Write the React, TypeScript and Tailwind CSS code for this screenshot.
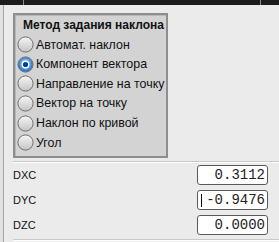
import React from "react";

const MODES = [
  "Автомат. наклон",
  "Компонент вектора",
  "Направление на точку",
  "Вектор на точку",
  "Наклон по кривой",
  "Угол",
];

const FIELDS = [
  { label: "DXC", value: "0.3112", focused: false },
  { label: "DYC", value: "-0.9476", focused: true },
  { label: "DZC", value: "0.0000", focused: false },
];

function Radio({ checked }: { checked: boolean }) {
  return (
    <svg width="17" height="17" viewBox="0 0 17 17" className="shrink-0">
      <defs>
        <linearGradient id="off" x1="0" y1="0" x2="0" y2="1">
          <stop offset="0" stopColor="#f6f6f6" />
          <stop offset="1" stopColor="#c4c4c4" />
        </linearGradient>
        <radialGradient id="on" cx="0.5" cy="0.4" r="0.6">
          <stop offset="0" stopColor="#a6d8ff" />
          <stop offset="1" stopColor="#2a7fd6" />
        </radialGradient>
      </defs>
      <circle cx="8.5" cy="8.5" r="7.6" fill="url(#off)" stroke="#6e6e6e" strokeWidth="1" />
      {checked && (
        <>
          <circle cx="8.5" cy="8.5" r="6.8" fill="url(#on)" stroke="#1d5fa8" strokeWidth="0.8" />
          <circle cx="8.5" cy="8.5" r="3.9" fill="#ffffff" />
          <circle cx="8.5" cy="8.5" r="2.6" fill="#0b3d8c" />
        </>
      )}
    </svg>
  );
}

export default function App() {
  const selected = 1;
  return (
    <div className="w-[279px] h-[242px] overflow-hidden bg-[#ebebeb] font-['Liberation_Sans',Arial,sans-serif] text-[#111]">
      {/* top strip */}
      <div className="h-[5px] bg-[#1c1c1c] flex">
        <div className="w-[23px]" />
        <div className="w-px bg-[#8a8a8a]" />
        <div className="flex-1" />
        <div className="w-px bg-[#8a8a8a]" />
        <div className="w-[18px]" />
      </div>

      <div className="flex h-[237px]">
        <div className="w-[3px] bg-[#e2e2e2]" />
        <div className="w-px bg-[#a4a4a4]" />

        <div className="flex-1 flex flex-col pt-[8px]">
          <div className="ml-[9px] w-[155px] h-[145px] bg-[#d3d3d3] border-2 border-[#8e8e8e] shadow-[inset_1px_1px_0_#b8b8b8] pt-[3px] pl-[2px] overflow-hidden">
            <div className="pl-[6px] h-[15px] leading-[15px] text-[12px] font-bold whitespace-nowrap">Метод задания наклона</div>
            <div className="mt-[2px] flex flex-col">
              {MODES.map((m, i) => (
                <div key={m} className="h-[19.6px] flex items-center gap-[2px]">
                  <Radio checked={i === selected} />
                  <span className="text-[12.4px] leading-none whitespace-nowrap">{m}</span>
                </div>
              ))}
            </div>
          </div>

          <div className="mt-[3px] ml-[9px] h-px bg-[#c9c9c9] border-b border-white box-content" />

          <div className="ml-[9px] mr-[11px] mt-[2px] flex flex-col gap-[5px]">
            {FIELDS.map((f) => (
              <div key={f.label} className="h-[20px] flex items-center justify-between">
                <span className="text-[11px] leading-none">{f.label}</span>
                <div className="w-[71px] h-[20px] bg-white border border-[#5a5a5a] rounded-[3px] flex items-center justify-end pr-[2px] relative font-['Liberation_Mono',monospace] text-[14px] text-[#222]">
                  {f.focused && <div className="absolute left-[3px] top-[3px] w-px h-[13px] bg-black" />}
                  {f.value}
                </div>
              </div>
            ))}
          </div>

          <div className="mt-[4px] ml-[9px] h-px bg-[#c9c9c9] border-b border-white box-content" />
        </div>
      </div>
    </div>
  );
}
